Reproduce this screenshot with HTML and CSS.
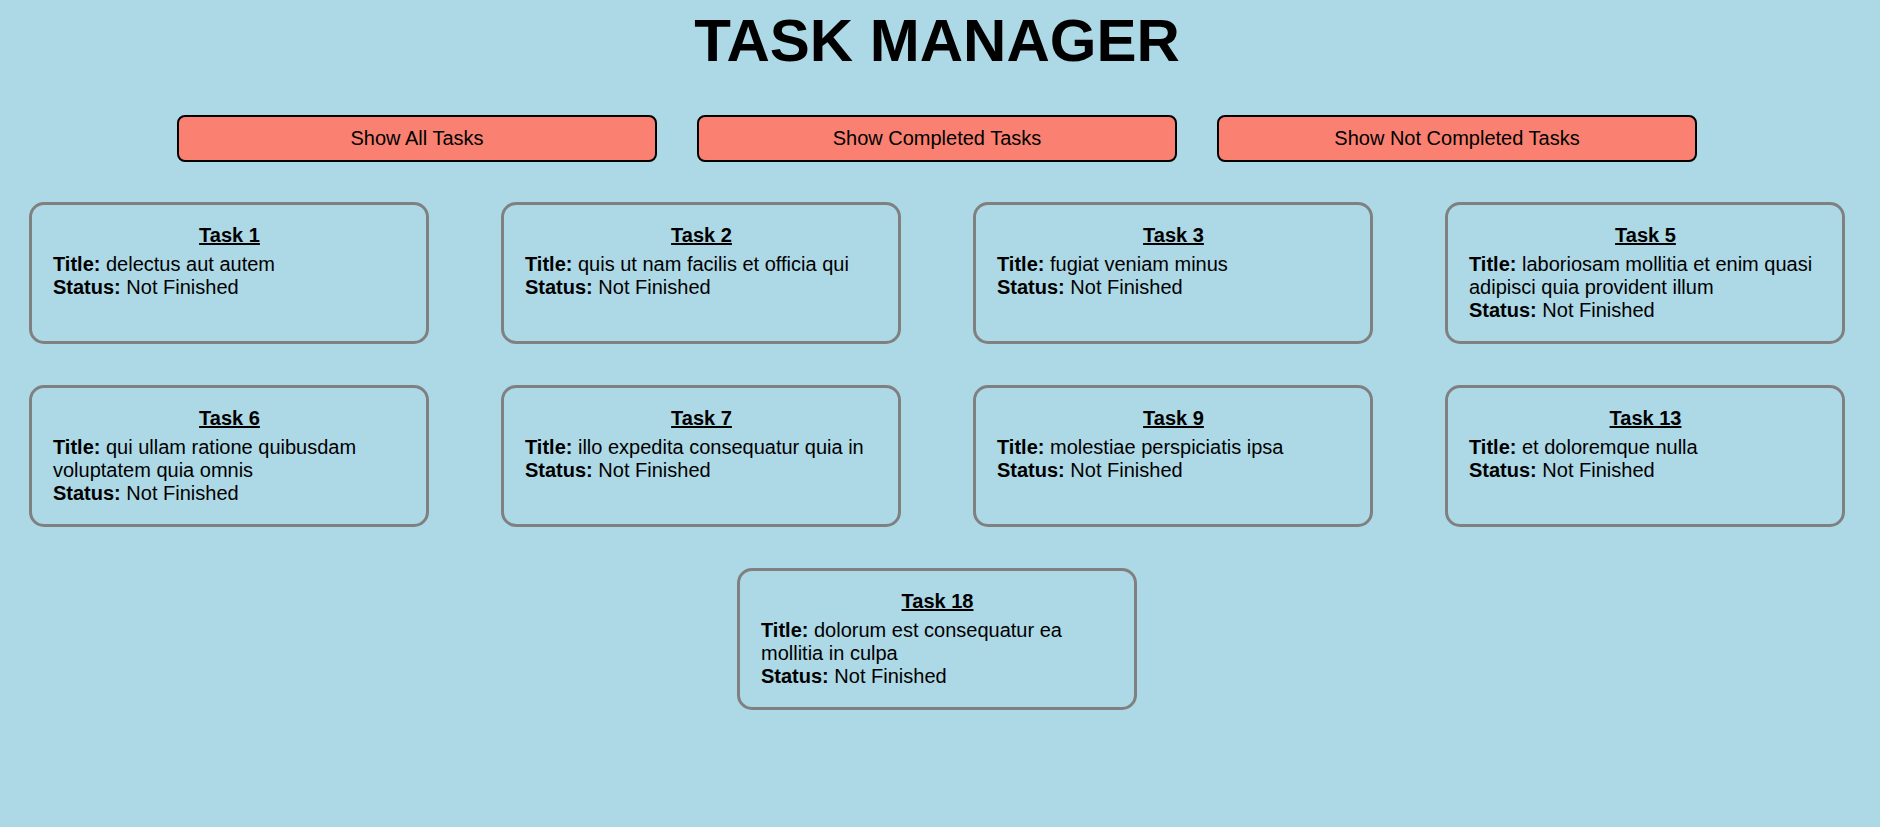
FILE: index.html
```html
<!DOCTYPE html>
<html lang="en">
<head>
    <meta charset="UTF-8">
    <meta name="viewport" content="width=device-width, initial-scale=1.0">
    <title>Task Manager</title>
    <link rel="stylesheet" href="styles.css">
</head>
<body>
    <h1 class="page-title">TASK MANAGER</h1>

    <div class="filters">
        <button type="button" class="filter-button">Show All Tasks</button>
        <button type="button" class="filter-button">Show Completed Tasks</button>
        <button type="button" class="filter-button">Show Not Completed Tasks</button>
    </div>

    <div class="task-list">
        <div class="task-card">
            <h3>Task 1</h3>
            <p><strong>Title:</strong> delectus aut autem</p>
            <p><strong>Status:</strong> Not Finished</p>
        </div>
        <div class="task-card">
            <h3>Task 2</h3>
            <p><strong>Title:</strong> quis ut nam facilis et officia qui</p>
            <p><strong>Status:</strong> Not Finished</p>
        </div>
        <div class="task-card">
            <h3>Task 3</h3>
            <p><strong>Title:</strong> fugiat veniam minus</p>
            <p><strong>Status:</strong> Not Finished</p>
        </div>
        <div class="task-card">
            <h3>Task 5</h3>
            <p><strong>Title:</strong> laboriosam mollitia et enim quasi adipisci quia provident illum</p>
            <p><strong>Status:</strong> Not Finished</p>
        </div>
        <div class="task-card">
            <h3>Task 6</h3>
            <p><strong>Title:</strong> qui ullam ratione quibusdam voluptatem quia omnis</p>
            <p><strong>Status:</strong> Not Finished</p>
        </div>
        <div class="task-card">
            <h3>Task 7</h3>
            <p><strong>Title:</strong> illo expedita consequatur quia in</p>
            <p><strong>Status:</strong> Not Finished</p>
        </div>
        <div class="task-card">
            <h3>Task 9</h3>
            <p><strong>Title:</strong> molestiae perspiciatis ipsa</p>
            <p><strong>Status:</strong> Not Finished</p>
        </div>
        <div class="task-card">
            <h3>Task 13</h3>
            <p><strong>Title:</strong> et doloremque nulla</p>
            <p><strong>Status:</strong> Not Finished</p>
        </div>
        <div class="task-card">
            <h3>Task 18</h3>
            <p><strong>Title:</strong> dolorum est consequatur ea mollitia in culpa</p>
            <p><strong>Status:</strong> Not Finished</p>
        </div>
    </div>
</body>
</html>
```

FILE: styles.css
```css
body {
    font-family: "Liberation Sans", Arial, sans-serif;
    background-color: lightblue;
    color: #000;
    margin: 0;
    padding: 0 6px 0 0;
}

.page-title {
    margin: 0;
    padding-top: 6px;
    font-size: 60px;
    line-height: 69px;
    text-align: center;
}

.filters {
    display: flex;
    justify-content: center;
    gap: 40px;
    margin-top: 40px;
}

.filter-button {
    width: 480px;
    padding: 10px;
    font-family: inherit;
    font-size: 20px;
    line-height: 23px;
    color: #000;
    background-color: salmon;
    border: 2px solid #000;
    border-radius: 8px;
    cursor: pointer;
}

.task-list {
    display: flex;
    flex-wrap: wrap;
    justify-content: center;
    column-gap: 72px;
    row-gap: 41px;
    margin-top: 40px;
}

.task-card {
    box-sizing: border-box;
    width: 400px;
    height: 142px;
    padding: 19px 20px 0 21px;
    border: 3px solid gray;
    border-radius: 15px;
    font-size: 20px;
    line-height: 23px;
}

.task-card h3 {
    margin: 0 0 6px;
    font-size: 20px;
    text-align: center;
    text-decoration: underline;
}

.task-card p {
    margin: 0;
}
```
